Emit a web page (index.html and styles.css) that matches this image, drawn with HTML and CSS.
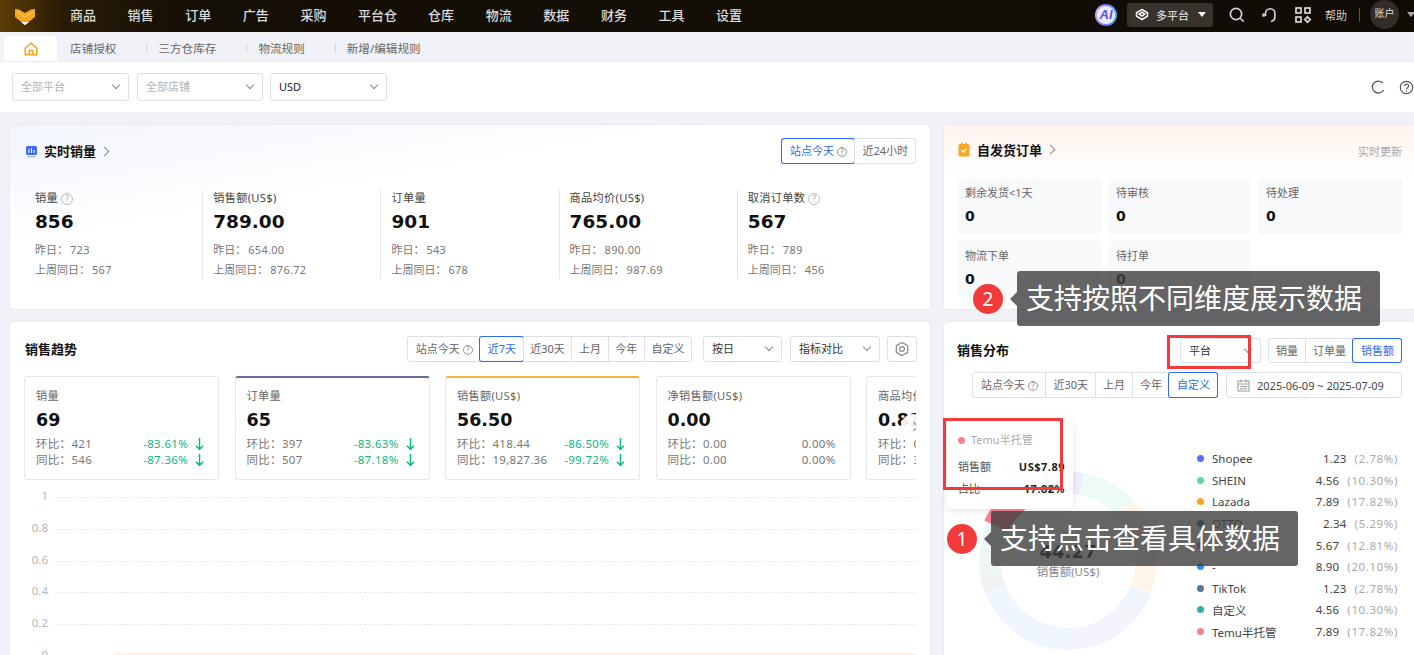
FILE: index.html
```html
<!DOCTYPE html>
<html lang="zh">
<head>
<meta charset="utf-8">
<title>数据概览</title>
<link rel="stylesheet" href="styles.css">
</head>
<body>
<svg class="defs" width="0" height="0"><symbol id="arrow" viewBox="0 0 9 14"><path d="M4.5 1v11.5M1 8.8l3.5 3.7L8 8.8" fill="none" stroke="#0db87f" stroke-width="1.5"/></symbol></svg>
<div class="page">
  <header class="topbar">
    <svg class="logo" width="22" height="22" viewBox="0 0 22 22"><path d="M1 5l4 .5 6 3.5 6-3.5 4-.5v8l-5 4-5 4-5-4-5-4z" fill="#f5a623"/><path d="M3 8l8 5 8-5" fill="none" stroke="#ffc04d" stroke-width="1.2"/><path d="M7 18h8l-4 3z" fill="#fff"/></svg>
    <nav class="nav">
      <a>商品</a><a>销售</a><a>订单</a><a>广告</a><a>采购</a><a>平台仓</a><a class="nav-wide">仓库</a><a>物流</a><a>数据</a><a>财务</a><a>工具</a><a>设置</a>
    </nav>
    <div class="top-right">
      <span class="ai-badge">AI</span>
      <span class="platform-btn">
        <svg width="14" height="14" viewBox="0 0 14 14" fill="none" stroke="#fff" stroke-width="1.5"><path d="M7 1.5l5.5 3.2v3.4L7 11.5 1.5 8.1V4.7z"/><path d="M7 4.2l3 1.9-3 1.9-3-1.9z"/></svg>
        <span>多平台</span><i class="tri"></i>
      </span>
      <svg class="ticon" width="18" height="18" viewBox="0 0 18 18" fill="none" stroke="#d8d8d8" stroke-width="1.6"><circle cx="8" cy="8" r="5.6"/><path d="M12.2 12.2l3.6 3.6"/></svg>
      <svg class="ticon" width="18" height="18" viewBox="0 0 18 18" fill="none" stroke="#d8d8d8" stroke-width="1.6"><path d="M4.5 10V7.5a4.7 4.7 0 0 1 9.4 0v3.5c0 2.5-2 4-4 4.5"/><path d="M2.6 7.5v3.2" stroke-width="2.4"/></svg>
      <svg class="ticon" width="18" height="18" viewBox="0 0 18 18" fill="none" stroke="#d8d8d8" stroke-width="1.7"><rect x="2" y="2" width="5" height="5"/><rect x="11" y="2" width="5" height="5"/><rect x="2" y="11" width="5" height="5"/><path d="M13.5 10.8l2.7 2.7-2.7 2.7-2.7-2.7z"/></svg>
      <span class="help">帮助</span>
      <i class="vline"></i>
      <span class="account">账户</span>
      <i class="tri tri-gray"></i>
    </div>
  </header>

  <div class="tabs">
    <span class="tab-home">
      <svg width="14" height="14" viewBox="0 0 14 14" fill="none" stroke="#f5a623" stroke-width="1.5"><path d="M1.2 6.2L7 1.2l5.8 5v6.6H1.2z"/><path d="M5.2 12.8V8.6h3.6v4.2"/></svg>
    </span>
    <span class="tab">店铺授权</span><span class="tab tab-sep">三方仓库存</span><span class="tab tab-sep">物流规则</span><span class="tab tab-sep">新增/编辑规则</span>
  </div>

  <div class="filters">
    <span class="select w117 muted">全部平台<i class="chev"></i></span>
    <span class="select w126 muted">全部店铺<i class="chev"></i></span>
    <span class="select w117 sel-cur">USD<i class="chev"></i></span>
    <span class="filter-icons">
      <svg width="14" height="14" viewBox="0 0 14 14" fill="none" stroke="#555" stroke-width="1.3"><path d="M12 3.2A6 6 0 1 0 12.6 10"/></svg>
      <svg width="15" height="15" viewBox="0 0 15 15" fill="none" stroke="#555" stroke-width="1.2"><circle cx="7.5" cy="7.5" r="6.2"/><path d="M5.6 6a2 2 0 1 1 2.9 1.8c-.7.4-1 .7-1 1.5"/><path d="M7.5 10.6v1.2"/></svg>
    </span>
  </div>

  <main class="board">
    <section class="card card-realtime">
      <div class="card-head">
        <svg width="13" height="13" viewBox="0 0 13 13"><rect x="1" y="1" width="11" height="9" rx="1.5" fill="#3e6df5"/><path d="M4 4v4M6.5 3v5M9 5v3" stroke="#fff" stroke-width="1"/><rect x="2.5" y="11" width="8" height="1.4" fill="#a9bdf9"/></svg>
        <h2 class="card-title">实时销量</h2><i class="chev-r"></i>
        <span class="seg seg-right">
          <b class="on q-seg">站点今天<i class="q">?</i></b><b>近24小时</b>
        </span>
      </div>
      <div class="metrics">
        <div class="metric"><p class="m-label">销量 <i class="q q-big">?</i></p><p class="m-value">856</p><p class="m-sub">昨日：<span>723</span></p><p class="m-sub">上周同日：<span>567</span></p></div>
        <div class="metric"><p class="m-label">销售额(US$)</p><p class="m-value">789.00</p><p class="m-sub">昨日：<span>654.00</span></p><p class="m-sub">上周同日：<span>876.72</span></p></div>
        <div class="metric"><p class="m-label">订单量</p><p class="m-value">901</p><p class="m-sub">昨日：<span>543</span></p><p class="m-sub">上周同日：<span>678</span></p></div>
        <div class="metric"><p class="m-label">商品均价(US$)</p><p class="m-value">765.00</p><p class="m-sub">昨日：<span>890.00</span></p><p class="m-sub">上周同日：<span>987.69</span></p></div>
        <div class="metric"><p class="m-label">取消订单数 <i class="q q-big">?</i></p><p class="m-value">567</p><p class="m-sub">昨日：<span>789</span></p><p class="m-sub">上周同日：<span>456</span></p></div>
      </div>
    </section>

    <section class="card card-orders">
      <div class="card-head orders-head">
        <svg width="14" height="15" viewBox="0 0 14 15"><rect x="1.5" y="2" width="11" height="12.5" rx="1.5" fill="#f9a825"/><rect x="4" y="0.5" width="1.6" height="3" fill="#f9a825"/><rect x="8.4" y="0.5" width="1.6" height="3" fill="#f9a825"/><path d="M4.5 8l2 2 3-3.4" fill="none" stroke="#fff" stroke-width="1.2"/></svg>
        <h2 class="card-title">自发货订单</h2><i class="chev-r"></i>
        <span class="live">实时更新</span>
      </div>
      <div class="order-grid">
        <div class="order-cell"><p>剩余发货&lt;1天</p><b>0</b></div>
        <div class="order-cell"><p>待审核</p><b>0</b></div>
        <div class="order-cell"><p>待处理</p><b>0</b></div>
        <div class="order-cell"><p>物流下单</p><b>0</b></div>
        <div class="order-cell"><p>待打单</p><b>0</b></div>
      </div>
    </section>

    <section class="card card-trend">
      <div class="trend-head">
        <h2 class="card-title plain trend-title">销售趋势</h2>
        <span class="seg seg-push"><b class="q-seg">站点今天<i class="q">?</i></b><b class="on">近7天</b><b>近30天</b><b>上月</b><b>今年</b><b>自定义</b></span>
        <span class="select w79 dark">按日<i class="chev"></i></span>
        <span class="select w90 dark">指标对比<i class="chev"></i></span>
        <span class="gear"><svg width="16" height="16" viewBox="0 0 16 16" fill="none" stroke="#888" stroke-width="1.2"><path d="M8 1.4l5.7 3.3v6.6L8 14.6l-5.7-3.3V4.7z"/><circle cx="8" cy="8" r="2.4"/></svg></span>
      </div>
      <div class="kpis">
        <div class="kpi"><p class="k-label">销量</p><p class="k-value">69</p>
          <div class="k-row"><span>环比：421</span><em>-83.61%<svg class="down"><use href="#arrow"/></svg></em></div>
          <div class="k-row"><span>同比：546</span><em>-87.36%<svg class="down"><use href="#arrow"/></svg></em></div></div>
        <div class="kpi kpi-slate"><p class="k-label">订单量</p><p class="k-value">65</p>
          <div class="k-row"><span>环比：397</span><em>-83.63%<svg class="down"><use href="#arrow"/></svg></em></div>
          <div class="k-row"><span>同比：507</span><em>-87.18%<svg class="down"><use href="#arrow"/></svg></em></div></div>
        <div class="kpi kpi-orange"><p class="k-label">销售额(US$)</p><p class="k-value">56.50</p>
          <div class="k-row"><span>环比：418.44</span><em>-86.50%<svg class="down"><use href="#arrow"/></svg></em></div>
          <div class="k-row"><span>同比：19,827.36</span><em>-99.72%<svg class="down"><use href="#arrow"/></svg></em></div></div>
        <div class="kpi"><p class="k-label">净销售额(US$)</p><p class="k-value">0.00</p>
          <div class="k-row"><span>环比：0.00</span><em class="flat">0.00%</em></div>
          <div class="k-row"><span>同比：0.00</span><em class="flat">0.00%</em></div></div>
        <div class="kpi"><p class="k-label">商品均价(US$)</p><p class="k-value">0.81</p>
          <div class="k-row"><span>环比：0.00</span><em class="flat">0.00%</em></div>
          <div class="k-row"><span>同比：3.00</span><em class="flat">0.00%</em></div></div>
        <span class="kpi-next"><i class="chev-r"></i></span>
      </div>
      <div class="chart">
        <div class="g-row"><span>1</span><i></i></div>
        <div class="g-row"><span>0.8</span><i></i></div>
        <div class="g-row"><span>0.6</span><i></i></div>
        <div class="g-row"><span>0.4</span><i></i></div>
        <div class="g-row"><span>0.2</span><i></i></div>
        <div class="g-row"><span>0</span><i></i></div>
        <i class="chart-mark"></i>
      </div>
    </section>

    <section class="card card-dist">
      <div class="dist-top">
        <h2 class="card-title plain">销售分布</h2>
        <span class="select w81 dark sel-dist">平台<i class="chev"></i></span>
        <span class="seg"><b>销量</b><b>订单量</b><b class="on">销售额</b></span>
      </div>
      <div class="dist-second">
        <span class="seg"><b class="q-seg">站点今天<i class="q">?</i></b><b>近30天</b><b>上月</b><b>今年</b><b class="on">自定义</b></span>
        <span class="date">
          <svg width="13" height="13" viewBox="0 0 13 13" fill="none" stroke="#999"><rect x="1" y="2" width="11" height="10"/><path d="M1 5h11M4 .5v3M9 .5v3M3 7.5h7M3 9.8h7"/></svg>
          2025-06-09 ~ 2025-07-09
        </span>
      </div>
      <div class="dist-body">
        <div class="donut">
          <svg width="192" height="192" viewBox="0 0 192 192" fill="none">
            <g transform="rotate(-90 96 96)" stroke-width="22">
              <circle cx="96" cy="96" r="78" pathLength="100" stroke="#eceefe" stroke-dasharray="2.78 97.22"/>
              <circle cx="96" cy="96" r="78" pathLength="100" stroke="#eefaf6" stroke-dasharray="10.3 89.7" stroke-dashoffset="-2.78"/>
              <circle cx="96" cy="96" r="78" pathLength="100" stroke="#fff6e8" stroke-dasharray="17.82 82.18" stroke-dashoffset="-13.08"/>
              <circle cx="96" cy="96" r="78" pathLength="100" stroke="#f0f5fb" stroke-dasharray="5.29 94.71" stroke-dashoffset="-30.9"/>
              <circle cx="96" cy="96" r="78" pathLength="100" stroke="#f7f3fd" stroke-dasharray="12.81 87.19" stroke-dashoffset="-36.19"/>
              <circle cx="96" cy="96" r="78" pathLength="100" stroke="#eff6fe" stroke-dasharray="20.1 79.9" stroke-dashoffset="-49"/>
              <circle cx="96" cy="96" r="78" pathLength="100" stroke="#eff1f5" stroke-dasharray="2.78 97.22" stroke-dashoffset="-69.1"/>
              <circle cx="96" cy="96" r="78" pathLength="100" stroke="#edf7f6" stroke-dasharray="10.3 89.7" stroke-dashoffset="-71.88"/>
              <circle cx="96" cy="96" r="80" pathLength="100" stroke="#fb7f93" stroke-width="26" stroke-dasharray="17.82 82.18" stroke-dashoffset="-82.18"/>
            </g>
          </svg>
          <div class="donut-center"><b>44.27</b><span>销售额(US$)</span></div>
        </div>
        <ul class="legend">
          <li><i style="background:#5b6ef5"></i><span>Shopee</span><b>1.23</b><em>(2.78%)</em></li>
          <li><i style="background:#5fd6a6"></i><span>SHEIN</span><b>4.56</b><em>(10.30%)</em></li>
          <li><i style="background:#fba31f"></i><span>Lazada</span><b>7.89</b><em>(17.82%)</em></li>
          <li><i style="background:#37618a"></i><span>OTTO</span><b>2.34</b><em>(5.29%)</em></li>
          <li><i style="background:#9a6bdc"></i><span>-</span><b>5.67</b><em>(12.81%)</em></li>
          <li><i style="background:#2d8cf0"></i><span>-</span><b>8.90</b><em>(20.10%)</em></li>
          <li><i style="background:#5e7199"></i><span>TikTok</span><b>1.23</b><em>(2.78%)</em></li>
          <li><i style="background:#33aea5"></i><span>自定义</span><b>4.56</b><em>(10.30%)</em></li>
          <li><i style="background:#fb7f93"></i><span>Temu半托管</span><b>7.89</b><em>(17.82%)</em></li>
        </ul>
      </div>
    </section>
  </main>

  <div class="pop">
    <p class="pop-title"><i></i>Temu半托管</p>
    <p class="pop-row"><span>销售额</span><b>US$7.89</b></p>
    <p class="pop-row"><span>占比</span><b>17.82%</b></p>
  </div>
  <i class="mark mark-select"></i>
  <i class="mark mark-pop"></i>
  <div class="hint hint-two"><span class="hint-num">2</span><span class="hint-text">支持按照不同维度展示数据</span></div>
  <div class="hint hint-one"><span class="hint-num">1</span><span class="hint-text">支持点击查看具体数据</span></div>
</div>
</body>
</html>
```
FILE: styles.css
```css
* { box-sizing: border-box; }
html, body { margin: 0; padding: 0; }
body { font-family: "Noto Sans", "Noto Sans CJK SC", sans-serif; font-size: 12px; color: #333; background: #f0f2f7; }
p, h2, ul { margin: 0; padding: 0; }
i, em { font-style: normal; }
.defs { position: absolute; }
.page { position: relative; width: 1414px; height: 655px; overflow: hidden; }

.topbar { height: 32px; display: flex; align-items: center; padding-left: 14px; color: #ddd;
  background: linear-gradient(90deg, #5e3d06 0, #2a1c07 60px, #150f06 180px, #100c05 100%); }
.logo { flex: none; margin-top: -2px; }
.nav { display: flex; margin-left: 34px; font-size: 13px; font-weight: 500; color: #dcdcdc; margin-top: -3px; }
.nav a { margin-right: 31.6px; white-space: nowrap; }
.nav a:nth-child(6) { margin-right: 31px; }
.top-right { margin-left: auto; display: flex; align-items: center; height: 29px; align-self: flex-start; }
.ai-badge { width: 22px; height: 22px; border-radius: 50%; margin-right: 10px;
  background: radial-gradient(circle, #ecebff 0 8.5px, transparent 9.5px), linear-gradient(100deg, #c9bdfb, #7a6cf5 50%, #2fc4e8);
  color: #5b4ff0; font: italic 700 13px/22px "Liberation Sans", sans-serif; text-align: center; }
.platform-btn { width: 86px; height: 24px; border-radius: 3px; background: #37322c; display: flex; align-items: center; padding-left: 8px; gap: 7px; color: #eee; font-size: 11px; margin-right: 15px; }
.tri { display: block; width: 0; height: 0; border: 4px solid transparent; border-top: 5px solid #fff; border-bottom: 0; margin-left: 2px; }
.tri-gray { border-top-color: #aaa; margin: 0 -1px 0 8px; }
.ticon { margin-right: 15px; }
.help { font-size: 11px; color: #ccc; margin-left: -2px; }
.vline { width: 1px; height: 14px; background: #555; margin: 0 10px 0 12px; }
.account { width: 29px; height: 29px; border-radius: 50%; background: #332d27; color: #ddd; font-size: 10px; line-height: 27px; text-align: center; }

.tabs { height: 30px; display: flex; align-items: flex-end; padding-left: 4px; border-bottom: 1px solid #eceef3; }
.tab-home { width: 53px; height: 25px; background: #fff; border-radius: 5px 5px 0 0; display: flex; align-items: center; justify-content: center; }
.tab { height: 25px; line-height: 25px; color: #666; font-size: 11.6px; padding: 0 0 0 13px; position: relative; white-space: nowrap; }
.tab-sep { padding-left: 12px; margin-left: 30px; }
.tab-sep::before { content: ""; position: absolute; left: 0; top: 7px; width: 1px; height: 10px; background: #d5d8df; }

.filters { height: 50px; background: #fff; display: flex; align-items: center; padding: 0 0 0 12px; gap: 8px; }
.select { position: relative; height: 28px; line-height: 26px; border: 1px solid #dcdfe6; border-radius: 3px; padding-left: 8px; font-size: 11px; background: #fff; color: #222; display: block; }
.sel-cur { margin-left: -1px; }
.muted { color: #b0b3ba; }
.w117 { width: 117px; }
.w126 { width: 126px; }
.w79 { width: 79px; }
.w90 { width: 90px; }
.w81 { width: 81px; }
.dark { height: 26px; line-height: 24px; color: #333; }
.chev { position: absolute; right: 9px; top: 50%; width: 6px; height: 6px; margin-top: -5px; border-right: 1px solid #888; border-bottom: 1px solid #888; transform: rotate(45deg); }
.filter-icons { margin-left: auto; display: flex; align-items: center; gap: 14px; }

.board { display: grid; grid-template-columns: 922px 473px; grid-template-rows: 186px 400px; gap: 11px 12px; padding: 12px 0 0 9px; }
.card { background: #fff; border-radius: 4px; overflow: hidden; border: 1px solid #e9ebf0; }
.card-realtime { padding: 13px 14px 0 15px; background: linear-gradient(170deg, #f2f5fd 0, #fff 36%); }
.card-realtime .card-title { margin-top: -2px; }
.card-orders { padding: 11px 13px 0 13px; background: linear-gradient(180deg, #fff4ee 0, #fff 30%); }
.card-head { display: flex; align-items: center; height: 26px; }
.card-title { font-size: 13px; font-weight: 700; color: #111; margin-left: 6px; }
.card-title.plain { margin-left: 0; }
.chev-r { display: block; width: 7px; height: 7px; border-top: 1px solid #888; border-right: 1px solid #888; transform: rotate(45deg); margin-left: 5px; }
.seg { display: inline-flex; height: 26px; border: 1px solid #dcdfe6; border-radius: 3px; background: #fff; flex: none; }
.seg b { position: relative; font-weight: 400; font-size: 11px; line-height: 24px; color: #666; padding: 0 7px; border-left: 1px solid #dcdfe6; white-space: nowrap; }
.seg b:first-child { border-left: 0; }
.seg b.on { color: #2e6bf2; box-shadow: 0 0 0 1px #2e6bf2; border-left-color: transparent; border-radius: 2px; }
.seg b.q-seg { padding: 0 7.5px; }
.seg-right { margin-left: auto; }
.q { display: inline-block; width: 10px; height: 10px; margin-left: 3px; border: 1px solid #999; border-radius: 50%; font-size: 8px; line-height: 8px; text-align: center; color: #888; vertical-align: 0; }
.q-big { width: 12px; height: 12px; margin-left: 0; line-height: 10px; border-color: #bbb; color: #aaa; font-size: 9px; }
.metrics { display: flex; margin-top: 26px; }
.metric { width: 178.5px; height: 89px; padding-left: 10px; border-right: 1px solid #e5e7eb; }
.metric:last-child { border-right: 0; }
.m-label { font-size: 11.2px; line-height: 16px; color: #444; letter-spacing: .3px; white-space: nowrap; }
.m-value { font: 700 18.5px/24px "DejaVu Sans", sans-serif; color: #111; margin-top: 4px; }
.m-sub { font-size: 11px; line-height: 20px; color: #777; white-space: nowrap; }
.m-sub:nth-of-type(3) { margin-top: 6px; }
.m-sub span { margin-left: 2px; letter-spacing: .3px; }
.orders-head { height: 26px; }
.live { margin-left: auto; margin-top: 3px; font-size: 11px; color: #a8a8a8; }
.order-grid { display: grid; grid-template-columns: 144px 143px 144px; gap: 7px; margin-top: 16px; }
.order-cell { height: 56px; background: #f8f9fb; border-radius: 3px; padding: 6px 8px; }
.order-cell p { font-size: 11px; line-height: 18px; color: #666; }
.order-cell b { font: 700 14px/18px "DejaVu Sans", sans-serif; color: #111; display: block; margin-top: 5px; }

.card-trend { padding: 14px 13px 0 14px; position: relative; }
.trend-head { display: flex; align-items: center; gap: 8px; height: 26px; }
.trend-title { margin-left: 1px !important; margin-top: -2px; }
.seg-push { margin-left: auto; margin-right: 3px; }
.seg-push b { padding: 0 6.6px; }
.gear { width: 30px; height: 26px; border: 1px solid #dcdfe6; border-radius: 3px; display: flex; align-items: center; justify-content: center; margin-left: -1px; flex: none; }
.kpis { position: relative; display: flex; gap: 15.5px; margin-top: 14px; width: 892px; overflow: hidden; }
.kpi { width: 195px; height: 104px; flex: none; border: 1px solid #e6e8ee; border-radius: 3px; padding: 5px 14px 0 11px; }
.kpi-slate { border-top: 2px solid #5e7199; padding-top: 4px; }
.kpi-orange { border-top: 2px solid #fbb03b; padding-top: 4px; }
.k-label { font-size: 11.2px; line-height: 18px; color: #666; margin-top: 5px; letter-spacing: .3px; white-space: nowrap; }
.k-value { font: 700 17.5px/24px "DejaVu Sans", sans-serif; color: #111; margin-top: 3px; }
.k-row { display: flex; justify-content: space-between; align-items: center; font-size: 11.5px; line-height: 16px; color: #777; white-space: nowrap; letter-spacing: .3px; }
.k-row:nth-of-type(1) { margin-top: 4px; }
.k-row em { color: #0db87f; display: flex; align-items: center; }
.k-row em.flat { color: #777; }
.down { width: 9px; height: 14px; margin-left: 7px; }
.kpi-next { position: absolute; right: -9px; top: 38px; width: 24px; height: 24px; border-radius: 50%; background: rgba(255,255,255,.92); box-shadow: 0 0 4px rgba(0,0,0,.06); display: flex; align-items: center; padding-left: 4px; }
.chart { position: relative; margin-top: 0; width: 892px; }
.g-row { height: 31.7px; display: flex; align-items: center; color: #b5b5b5; font-size: 11.5px; }
.g-row span { width: 24px; text-align: right; }
.g-row i { flex: 1; margin: 4px 0 0 7px; border-top: 1px dashed #e8eaee; }
.chart-mark { position: absolute; left: 91px; right: 0; top: 173px; height: 2px; background: #fdf1e0; }

.card-dist { padding: 16px 13px 0 13px; }
.dist-top { display: flex; align-items: center; height: 25px; }
.dist-top .card-title { margin-right: auto; margin-top: -2px; }
.sel-dist { height: 25px; margin-right: 7px; }
.dist-top .seg { height: 25px; }
.dist-second { display: flex; justify-content: flex-end; gap: 8px; margin-top: 9px; }
.date { width: 176px; height: 26px; border: 1px solid #dcdfe6; border-radius: 3px; display: flex; align-items: center; gap: 7px; padding-left: 10px; font-size: 11px; color: #444; }
.dist-body { display: flex; margin-top: 0; }
.donut { position: relative; flex: none; width: 192px; height: 192px; margin: 67px 0 0 15px; }
.donut svg { display: block; }
.donut-center { position: absolute; left: 0; right: 0; top: 75px; text-align: center; }
.donut-center b { display: block; font: 700 18px/24px "DejaVu Sans", sans-serif; color: #111; }
.donut-center span { display: block; font-size: 11.5px; line-height: 16px; color: #888; }
.legend { list-style: none; margin: 50px 0 0 33px; width: 201px; }
.legend li { display: flex; align-items: center; height: 21.6px; font-size: 11.5px; color: #444; }
.legend li i { width: 7px; height: 7px; border-radius: 50%; margin-right: 8px; flex: none; }
.legend li span { flex: 1; white-space: nowrap; }
.legend li b { font-weight: 400; letter-spacing: .2px; }
.legend li em { margin-left: 8px; text-align: right; color: #aaa; letter-spacing: .6px; }

.pop { position: absolute; left: 947px; top: 419px; width: 126px; height: 90px; background: #fff; border-radius: 6px; box-shadow: 0 2px 8px rgba(0,0,0,.1); padding: 13px 8px 0 11px; }
.pop-title { color: #aaa; font-size: 11px; line-height: 16px; display: flex; align-items: center; }
.pop-title i { width: 7px; height: 7px; border-radius: 50%; background: #fb7f93; margin-right: 6px; }
.pop-row { display: flex; justify-content: space-between; font-size: 11px; line-height: 22px; color: #555; }
.pop-row:nth-child(2) { margin-top: 8px; }
.pop-row b { color: #222; font-weight: 700; letter-spacing: .5px; }
.mark { position: absolute; border: 3px solid #f23a3a; display: block; }
.mark-select { left: 1167px; top: 335px; width: 84px; height: 34px; }
.mark-pop { left: 943px; top: 418px; width: 120px; height: 72px; }
.hint { position: absolute; height: 55px; display: flex; align-items: center; }
.hint-one { left: 947px; top: 511px; }
.hint-two { left: 973px; top: 271px; }
.hint-num { width: 30px; height: 30px; border-radius: 50%; background: #f23a3a; color: #fff; font: 19px/30px "Noto Sans", sans-serif; text-align: center; margin-right: 14px; position: relative; }
.hint-num::after { content: ""; position: absolute; right: -14px; top: 8px; border: 7px solid transparent; border-right: 7px solid rgba(62,62,62,.8); border-left: 0; }
.hint-text { height: 55px; line-height: 55px; padding: 0 18px 0 9px; background: rgba(62,62,62,.8); color: #fff; font-size: 28px; border-radius: 3px; white-space: nowrap; }
```
